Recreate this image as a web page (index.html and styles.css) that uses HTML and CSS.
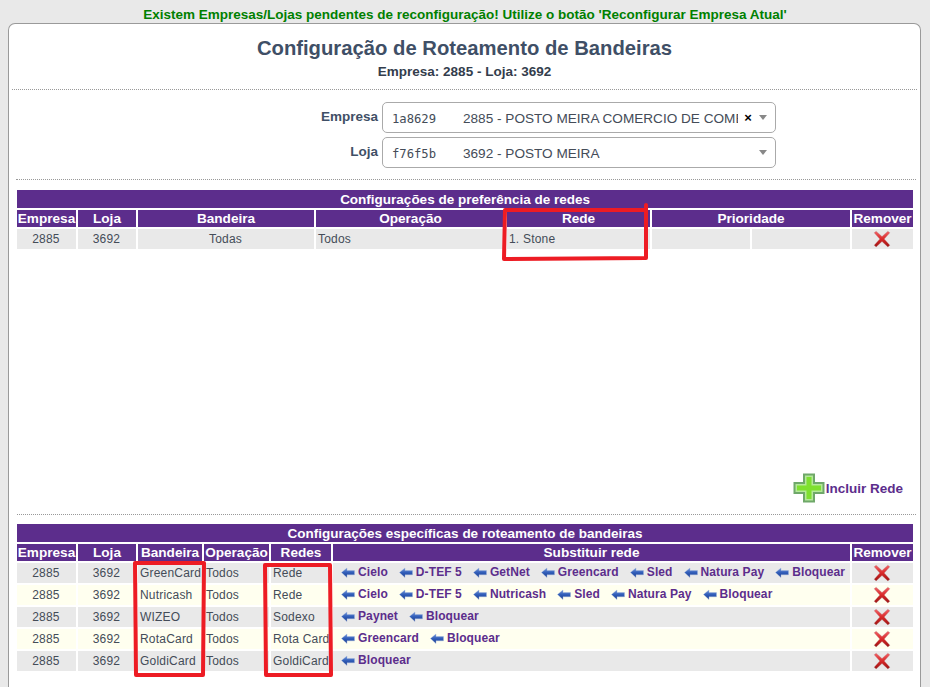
FILE: index.html
```html
<!DOCTYPE html>
<html lang="pt-BR">
<head>
<meta charset="utf-8">
<title>Configuração de Roteamento de Bandeiras</title>
<link rel="stylesheet" href="styles.css">
</head>
<body>
<svg class="defs" width="0" height="0" aria-hidden="true">
  <defs>
    <linearGradient id="ga" x1="0" y1="0" x2="0" y2="1"><stop offset="0" stop-color="#6f93d8"/><stop offset="0.5" stop-color="#2f5cb8"/><stop offset="1" stop-color="#1f3f8f"/></linearGradient>
    <linearGradient id="gx" x1="0" y1="0" x2="0" y2="1"><stop offset="0" stop-color="#f0656a"/><stop offset="0.5" stop-color="#d92a2a"/><stop offset="1" stop-color="#9c1414"/></linearGradient>
    <symbol id="arrow" viewBox="0 0 14 11"><path d="M0.5 5.5 L6 1 V3.6 H13.5 V7.8 H6 V10.5 Z" fill="url(#ga)" stroke="#9db4dc" stroke-width="0.4"/></symbol>
    <symbol id="cross" viewBox="0 0 16 16"><path d="M1 2.5 L2.8 1 L8 5.8 L13.2 1 L15 2.5 L10 8 L15 13.5 L13.2 15 L8 10.2 L2.8 15 L1 13.5 L6 8 Z" fill="url(#gx)" stroke="#b98a8a" stroke-width="0.3"/></symbol>
  </defs>
</svg>
<p class="notice">Existem Empresas/Lojas pendentes de reconfiguração! Utilize o botão 'Reconfigurar Empresa Atual'</p>
<main class="panel">
  <header class="head">
    <h1>Configuração de Roteamento de Bandeiras</h1>
    <h2>Empresa: 2885 - Loja: 3692</h2>
  </header>
  <form class="filters">
    <div class="field">
      <label>Empresa</label>
      <div class="select"><span class="code">1a8629</span><span class="val">2885 - POSTO MEIRA COMERCIO DE COMBUSTIVEIS</span><span class="clear">×</span><span class="caret"></span></div>
    </div>
    <div class="field">
      <label>Loja</label>
      <div class="select"><span class="code">f76f5b</span><span class="val">3692 - POSTO MEIRA</span><span class="caret"></span></div>
    </div>
  </form>
  <section class="pref">
    <table class="grid">
      <colgroup><col class="c1"><col class="c2"><col class="c3"><col class="c4"><col class="c5"><col class="c6"><col class="c6"><col class="c9"></colgroup>
      <tr><th class="title" colspan="8">Configurações de preferência de redes</th></tr>
      <tr><th>Empresa</th><th>Loja</th><th>Bandeira</th><th>Operação</th><th>Rede</th><th colspan="2">Prioridade</th><th>Remover</th></tr>
      <tr class="odd"><td class="ctr">2885</td><td class="ctr">3692</td><td class="ctr">Todas</td><td>Todos</td><td>1. Stone</td><td></td><td></td><td class="ctr"><svg class="x"><use href="#cross"/></svg></td></tr>
    </table>
    <div class="add"><svg class="plus" viewBox="0 0 32 30"><path d="M11 1.5 H21 V10 H30.5 V20 H21 V28.5 H11 V20 H1.5 V10 H11 Z" fill="#b5e89a" stroke="#6fa869" stroke-width="2"/><path d="M13.5 4 H18.5 V12.5 H28 V17.5 H18.5 V26 H13.5 V17.5 H4 V12.5 H13.5 Z" fill="#7fe02f"/></svg><a>Incluir Rede</a></div>
  </section>
  <section class="spec">
    <table class="grid">
      <colgroup><col class="c1"><col class="c2"><col class="d3"><col class="d4"><col class="d5"><col class="d6"><col class="c9"></colgroup>
      <tr><th class="title" colspan="7">Configurações específicas de roteamento de bandeiras</th></tr>
      <tr><th>Empresa</th><th>Loja</th><th>Bandeira</th><th>Operação</th><th>Redes</th><th>Substituir rede</th><th>Remover</th></tr>
      <tr class="odd"><td class="ctr">2885</td><td class="ctr">3692</td><td>GreenCard</td><td>Todos</td><td>Rede</td><td class="subs"><a><svg class="ar"><use href="#arrow"/></svg>Cielo</a><a><svg class="ar"><use href="#arrow"/></svg>D-TEF 5</a><a><svg class="ar"><use href="#arrow"/></svg>GetNet</a><a><svg class="ar"><use href="#arrow"/></svg>Greencard</a><a><svg class="ar"><use href="#arrow"/></svg>Sled</a><a><svg class="ar"><use href="#arrow"/></svg>Natura Pay</a><a><svg class="ar"><use href="#arrow"/></svg>Bloquear</a></td><td class="ctr"><svg class="x"><use href="#cross"/></svg></td></tr>
      <tr class="even"><td class="ctr">2885</td><td class="ctr">3692</td><td>Nutricash</td><td>Todos</td><td>Rede</td><td class="subs"><a><svg class="ar"><use href="#arrow"/></svg>Cielo</a><a><svg class="ar"><use href="#arrow"/></svg>D-TEF 5</a><a><svg class="ar"><use href="#arrow"/></svg>Nutricash</a><a><svg class="ar"><use href="#arrow"/></svg>Sled</a><a><svg class="ar"><use href="#arrow"/></svg>Natura Pay</a><a><svg class="ar"><use href="#arrow"/></svg>Bloquear</a></td><td class="ctr"><svg class="x"><use href="#cross"/></svg></td></tr>
      <tr class="odd"><td class="ctr">2885</td><td class="ctr">3692</td><td>WIZEO</td><td>Todos</td><td>Sodexo</td><td class="subs"><a><svg class="ar"><use href="#arrow"/></svg>Paynet</a><a><svg class="ar"><use href="#arrow"/></svg>Bloquear</a></td><td class="ctr"><svg class="x"><use href="#cross"/></svg></td></tr>
      <tr class="even"><td class="ctr">2885</td><td class="ctr">3692</td><td>RotaCard</td><td>Todos</td><td>Rota Card</td><td class="subs"><a><svg class="ar"><use href="#arrow"/></svg>Greencard</a><a><svg class="ar"><use href="#arrow"/></svg>Bloquear</a></td><td class="ctr"><svg class="x"><use href="#cross"/></svg></td></tr>
      <tr class="odd"><td class="ctr">2885</td><td class="ctr">3692</td><td>GoldiCard</td><td>Todos</td><td>GoldiCard</td><td class="subs"><a><svg class="ar"><use href="#arrow"/></svg>Bloquear</a></td><td class="ctr"><svg class="x"><use href="#cross"/></svg></td></tr>
    </table>
  </section>
</main>
<svg class="marks" width="930" height="687" viewBox="0 0 930 687" aria-hidden="true">
  <path class="mark" d="M505 210 L646 210 L646 205 M505 210 L504 259 L646 258 L646 210"/>
  <path class="mark" d="M135 563 L204 563 L203 675 L136 675 Z"/>
  <path class="mark" d="M265 565 L330 565 L331 675 L266 675 Z"/>
</svg>
</body>
</html>
```
FILE: styles.css
```css
* { box-sizing: border-box; }
html, body { margin: 0; height: 687px; overflow: hidden; }
body {
  background: #e9e9e9;
  font-family: "Liberation Sans", Arial, sans-serif;
  font-size: 12px;
  color: #444c58;
  position: relative;
}
.defs { position: absolute; }
.notice {
  margin: 0;
  height: 23px;
  padding-top: 8px;
  line-height: 14px;
  text-align: center;
  font-size: 13.5px;
  font-weight: bold;
  color: #008000;
}
.panel {
  margin: 0 9px 0 8px;
  height: 664px;
  background: #fff;
  border: 1px solid #9a9a9a;
  border-bottom: 0;
  border-radius: 7px 7px 0 0;
  padding: 0 3px;
}
.head {
  height: 66px;
  padding-top: 12px;
  text-align: center;
  border-bottom: 1px dotted #999;
}
h1 {
  margin: 0;
  font-size: 20.25px;
  line-height: 24px;
  color: #3f4f66;
}
h2 {
  margin: 4px 0 0;
  font-size: 13.5px;
  line-height: 16px;
  color: #333d4c;
}
.filters {
  margin: 0 1px 0 4px;
  height: 90px;
  padding-top: 12px;
  border-bottom: 1px dotted #999;
  display: flex;
  flex-direction: column;
  gap: 4px;
}
.field {
  display: flex;
  justify-content: flex-end;
  gap: 4px;
  padding-right: 140px;
}
.field label {
  font-size: 13.5px;
  font-weight: bold;
  line-height: 28px;
  padding-top: 1px;
  color: #3f4f66;
}
.select {
  width: 394px;
  height: 31px;
  border: 1px solid #aaa;
  border-radius: 5px;
  display: flex;
  align-items: center;
  padding: 0 8px 0 9px;
  font-size: 13.6px;
  color: #444c58;
  background: #fff;
}
.code {
  font-family: "DejaVu Sans Mono", monospace;
  font-size: 12.2px;
  width: 71px;
  flex: none;
  padding-top: 2px;
}
.val { flex: 1; overflow: hidden; white-space: nowrap; width: 0; padding-top: 2px; }
.clear { flex: none; width: 12px; margin-left: 4px; font-weight: bold; font-size: 13px; color: #000; text-align: center; }
.caret {
  flex: none;
  margin-left: auto;
  width: 0;
  height: 0;
  border: 4px solid transparent;
  border-top: 5px solid #888;
  border-bottom: 0;
}
.clear + .caret { margin-left: 5px; }
.pref {
  margin: 0 1px 0 5px;
  height: 335px;
  padding-top: 10px;
  border-bottom: 1px dotted #999;
  position: relative;
}
.spec { margin: 0 1px 0 5px; padding-top: 9px; }
.grid {
  width: 896px;
  table-layout: fixed;
  border-collapse: collapse;
}
.grid th, .grid td { padding: 0 2px; border: 2px solid #fff; }
.grid tr > :first-child { border-left: 0; }
.grid tr > :last-child { border-right: 0; }
.grid tr:first-child th { border-top: 0; }
.grid th {
  background: #5c2d8c;
  color: #fff;
  font-size: 13.6px;
  font-weight: bold;
  height: 19px;
  line-height: 16px;
  text-align: center;
  white-space: nowrap;
  overflow: hidden;
}
.grid th:not(.title) { padding: 0; }
.grid th.title { font-size: 13.5px; padding-top: 1px; }
.grid td { height: 22px; white-space: nowrap; overflow: hidden; line-height: 14px; letter-spacing: 0.2px; }
.grid .ctr { text-align: center; padding-right: 3px; }
.odd td { background: #e9e9e9; }
.even td { background: #ffffef; }
.c1 { width: 60px; }
.c2 { width: 60px; }
.c3 { width: 178px; }
.c4 { width: 191px; }
.c5 { width: 145px; }
.c6 { width: 100px; }
.c9 { width: 62px; }
.d3 { width: 66px; }
.d4 { width: 67px; }
.d5 { width: 62px; }
.d6 { width: 519px; }
.grid .subs { padding-left: 8px; }
.subs a {
  display: inline-flex;
  align-items: center;
  font-weight: bold;
  color: #5c2d8c;
  letter-spacing: 0.1px;
  margin-right: 11px;
}
.ar { width: 14px; height: 11px; margin-right: 3px; flex: none; }
.x { display: block; width: 18px; height: 18px; margin: 0 auto; }
.add {
  position: absolute;
  right: 13px;
  bottom: 11px;
  display: flex;
  align-items: center;
  font-size: 13.5px;
  font-weight: bold;
  color: #5c2d8c;
}
.plus { width: 32px; height: 30px; margin-right: 1px; }
.marks { position: absolute; left: 0; top: 0; pointer-events: none; }
.mark { fill: none; stroke: #ed1c24; stroke-width: 4; stroke-linejoin: round; stroke-linecap: round; }
```
